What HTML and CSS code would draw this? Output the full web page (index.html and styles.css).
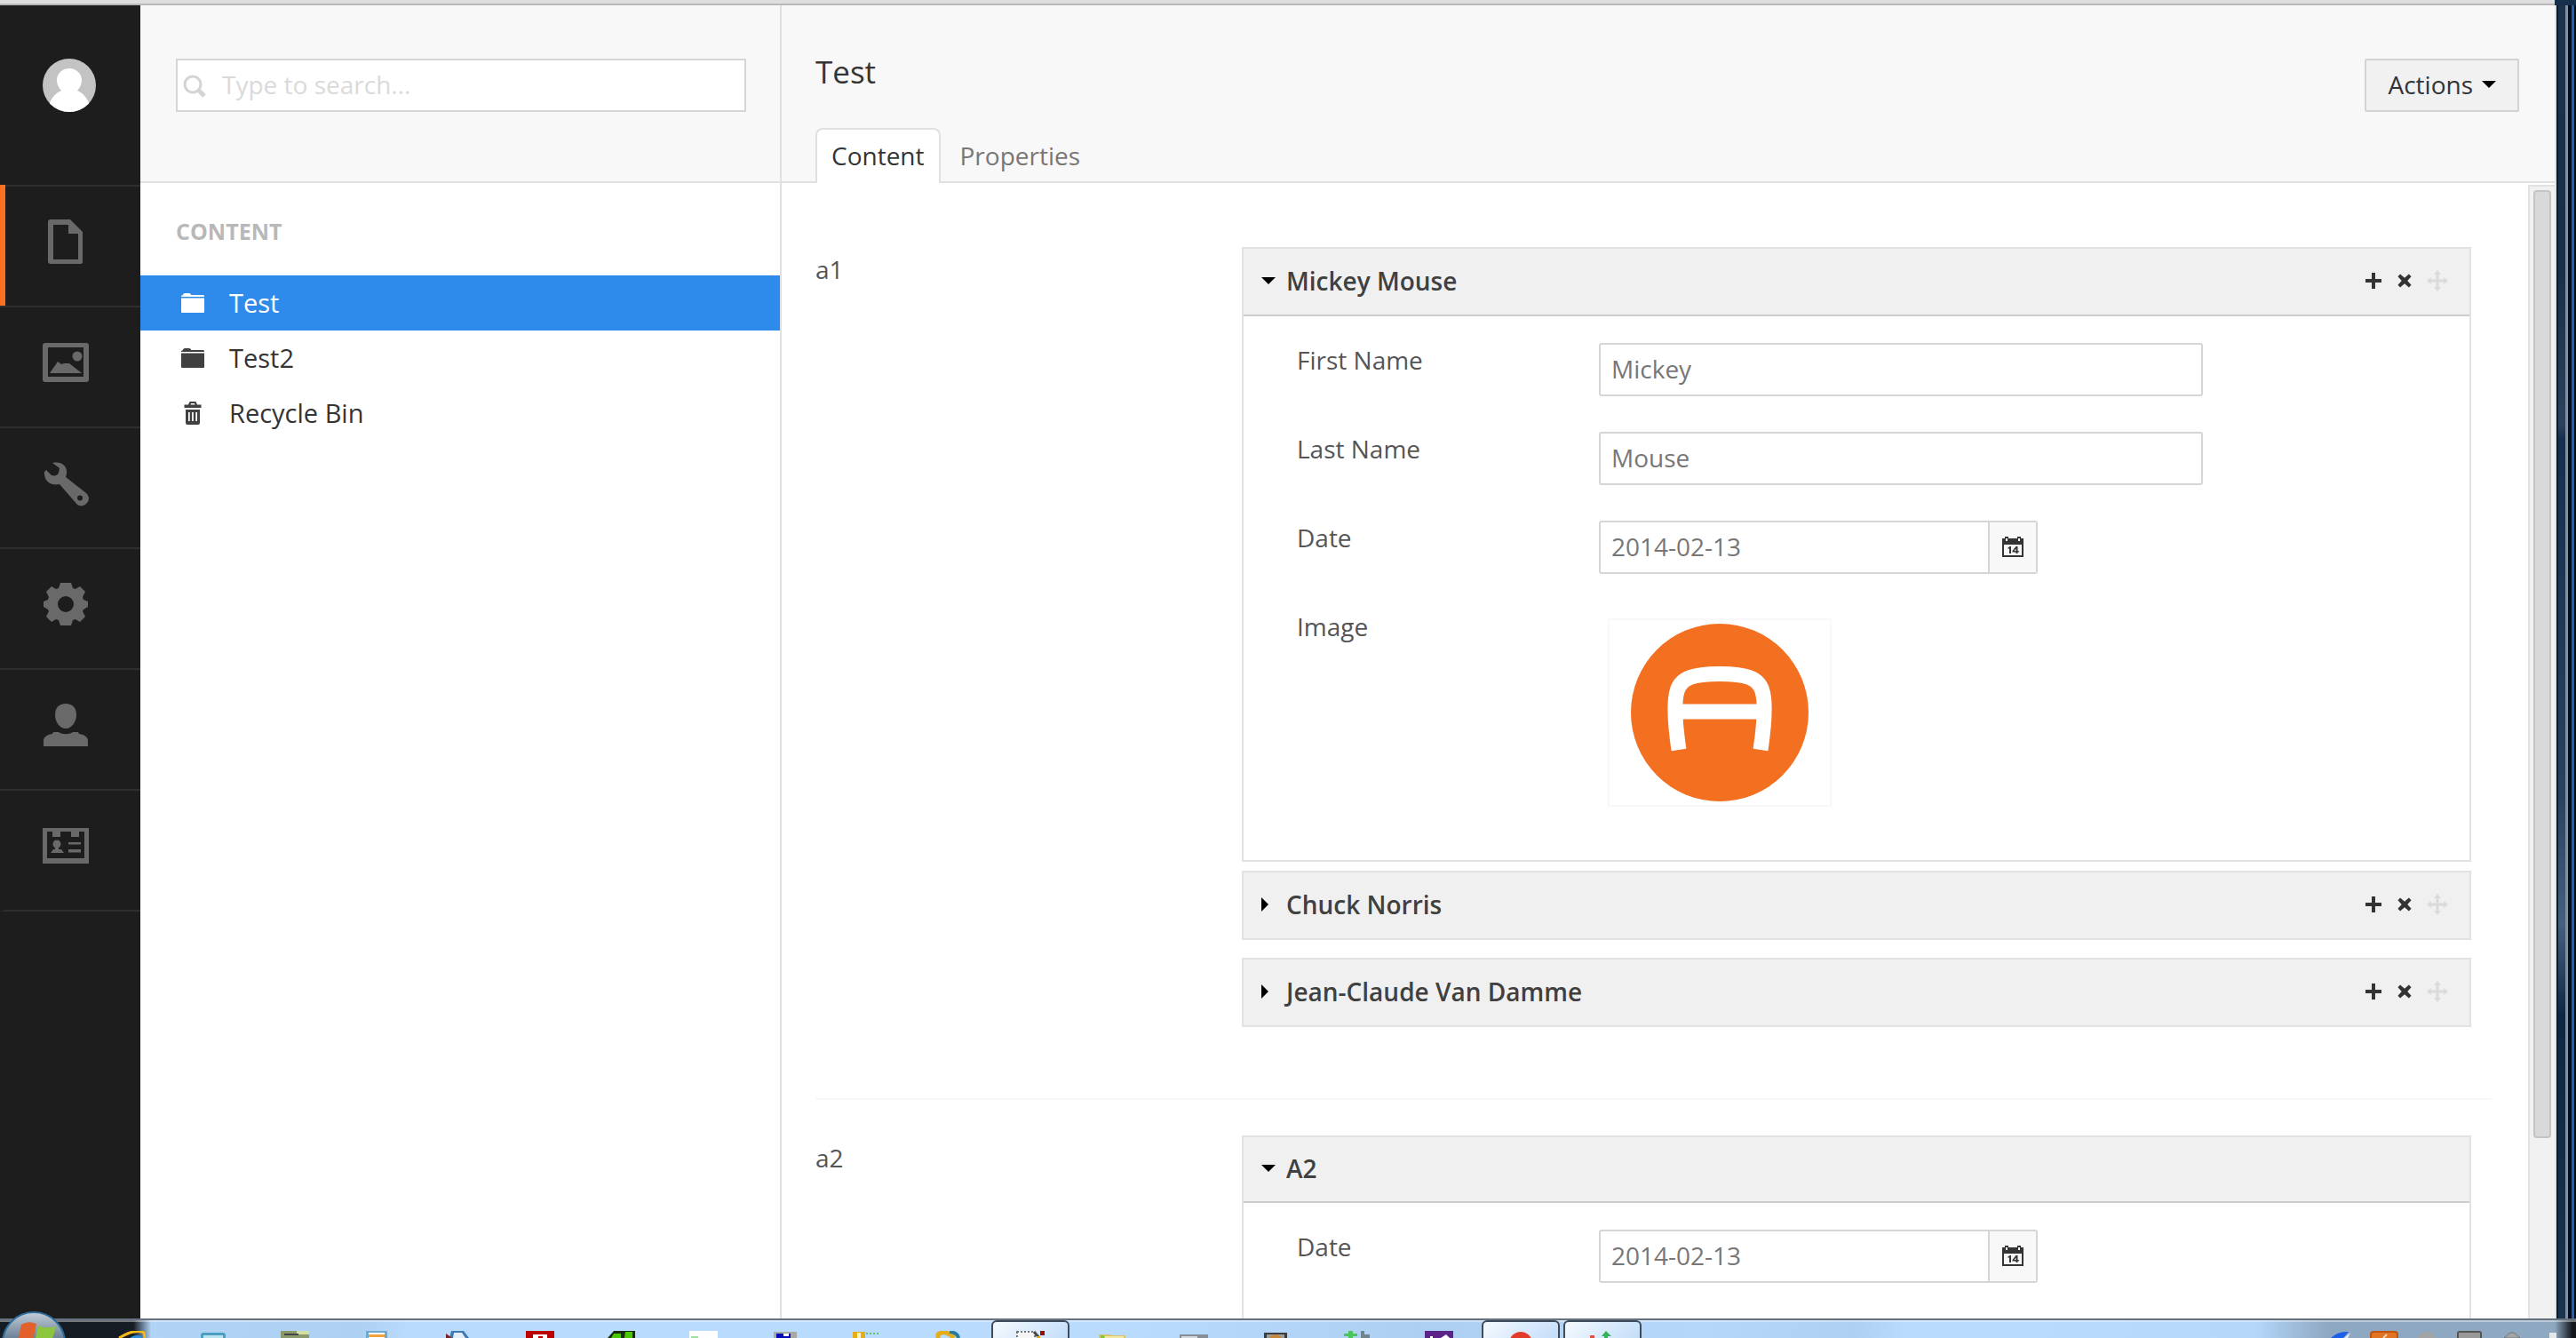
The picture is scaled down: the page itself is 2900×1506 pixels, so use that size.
FILE: index.html
```html
<!DOCTYPE html>
<html lang="en">
<head>
<meta charset="utf-8">
<title>Test</title>
<link rel="stylesheet" href="styles.css">
</head>
<body>
<svg class="defs" aria-hidden="true">
  <symbol id="i-plus" viewBox="0 0 20 20"><path d="M8 1h4v7h7v4h-7v7H8v-7H1V8h7z"/></symbol>
  <symbol id="i-cross" viewBox="0 0 20 20"><path d="M4.6 1.6 10 6.4l5.4-4.8 3 3L13.6 10l4.8 5.400-3 3L10 13.600l-5.400 4.800-3-3L6.400 10 1.600 4.600z"/></symbol>
  <symbol id="i-move" viewBox="0 0 24 24"><path d="m12 0 4 5h-2.500v5.500H19V8l5 4-5 4v-2.500h-5.500V19H16l-4 5-4-5h2.500v-5.500H5V16l-5-4 5-4v2.500h5.500V5H8z"/></symbol>
  <symbol id="i-down" viewBox="0 0 16 8"><path d="M0 0h16L8 8z"/></symbol>
  <symbol id="i-right" viewBox="0 0 8 16"><path d="M0 0v16l8-8z"/></symbol>
  <symbol id="i-folder" viewBox="0 0 26 22"><path d="M0 4V3l2-1V1l2-1h5l2 1v1h14l1 1v1z"/><path d="M0 5.500h26V21a1 1 0 0 1-1 1H1a1 1 0 0 1-1-1z"/></symbol>
  <symbol id="i-trash" viewBox="0 0 20 26"><path fill-rule="evenodd" d="M5 3.500 6.500 0h7L15 3.500h4.500V7H.5V3.500zm2.500 0h5L12 2H8zM2 9h16v15a2 2 0 0 1-2 2H4a2 2 0 0 1-2-2zm3 3v10h1.700V12zm4.100 0v10h1.700V12zm4.200 0v10H15V12z"/></symbol>
  <symbol id="i-cal" viewBox="0 0 26 26"><path fill-rule="evenodd" d="M1 3h3V1h4v2h10V1h4v2h3v21H1zm2 7v12h20V10zM5 3v3h2V3zm14 0v3h2V3z"/><path d="M9.500 12H11v8H9v-5.700l-1.500.8v-1.700zM16.500 12h2v5h1.300v1.500h-1.300V20h-2v-1.500h-4V17zm0 2.500L14.500 17h2z"/></symbol>
</svg>

<div class="chrome-edge"></div>
<div class="screen">
  <div class="app">
    <nav class="sections" aria-label="Sections">
      <a class="avatar" href="#" aria-label="Account">
        <svg viewBox="0 0 60 60"><clipPath id="round"><circle cx="30" cy="30" r="30"/></clipPath><g clip-path="url(#round)"><rect width="60" height="60" fill="#c3c3c3"/><path fill="#fff" d="M30 11c8 0 14 6 14 13 0 5-2 9-5 12 7 3 12 9 14 17L46 60H14L7 53c2-8 7-14 14-17-3-3-5-7-5-12 0-7 6-13 14-13z"/></g></svg>
      </a>
      <a class="section active" href="#" aria-label="Content"><svg viewBox="0 0 52 52"><path fill-rule="evenodd" d="M9 1h22l14 14v34a2 2 0 0 1-2 2H9a3 3 0 0 1-3-3V4a3 3 0 0 1 3-3zm3 6v39h28V17H29V7z"/></svg></a>
      <a class="section" href="#" aria-label="Media"><svg viewBox="0 0 52 52"><path fill-rule="evenodd" d="M3 4h46a3 3 0 0 1 3 3v38a3 3 0 0 1-3 3H3a3 3 0 0 1-3-3V7a3 3 0 0 1 3-3zm3 5v34h40V9z"/><path d="M8 38 17 25l4 3 3-1h6l14 11zM0 42h52v3H0z"/><circle cx="39" cy="19" r="5.500"/></svg></a>
      <a class="section" href="#" aria-label="Settings"><svg viewBox="0 0 52 52"><path fill-rule="evenodd" d="M11 3c10-2 17 3 16 12l-1 4 23 18a7.500 7.500 0 0 1 1 11 8 8 0 0 1-11 2L19 27C10 29 1 24 2 13l2-2 6 6c4 1 7 0 8-3l1-5zm31 36.500a3 3 0 1 0 .1 6 3 3 0 0 0-.1-6z"/></svg></a>
      <a class="section" href="#" aria-label="Developer"><svg viewBox="0 0 52 52"><path fill-rule="evenodd" d="M20 2h12l2 6 3 1 5-3 6 6-3 6 1 3 5 2v6l-5 3-1 2 3 6-6 6-5-3-3 1-2 6H20l-2-6-3-1-5 3-6-6 3-6-1-2-5-3v-6l5-2 1-3-3-6 6-6 5 3 3-1zm6 15a9 9 0 1 0 0 18 9 9 0 0 0 0-18z"/></svg></a>
      <a class="section" href="#" aria-label="Users"><svg viewBox="0 0 52 52"><path d="M26 2c8 0 12 5 12 13 0 7-5 15-12 15s-12-8-12-15C14 7 18 2 26 2zM12 34h6c4 3 12 3 16 0h6l1 2c7 1 10 4 10 8v6H1v-6c0-4 3-7 10-8z"/></svg></a>
      <a class="section" href="#" aria-label="Members"><svg viewBox="0 0 52 52"><path fill-rule="evenodd" d="M0 6h52v40H0zm5 4v30h42V10h-6v6h-9v-6H20v6h-9v-6z"/><circle cx="16" cy="24" r="4.500"/><path d="M14 26h4v4h3l3 4H9l3-4h2zM29 22h14v2.500H29zM29 30h14v3.500H29z"/></svg></a>
    </nav>

    <aside class="tree">
      <form class="search">
        <svg class="search-icon" viewBox="0 0 26 26"><circle cx="11" cy="11" r="9" fill="none" stroke="#d4d4d4" stroke-width="3"/><path d="m17 17 7 7" stroke="#d4d4d4" stroke-width="5"/></svg>
        <input type="text" aria-label="Search" placeholder="Type to search...">
      </form>
      <h2>CONTENT</h2>
      <ul>
        <li class="selected"><a href="#"><svg class="folder"><use href="#i-folder"/></svg>Test</a></li>
        <li><a href="#"><svg class="folder"><use href="#i-folder"/></svg>Test2</a></li>
        <li><a href="#"><svg class="trash"><use href="#i-trash"/></svg>Recycle Bin</a></li>
      </ul>
    </aside>

    <main class="editor">
      <header class="editor-head">
        <div class="title-row">
          <h1>Test</h1>
          <button class="actions" type="button">Actions <svg class="caret"><use href="#i-down"/></svg></button>
        </div>
        <div class="tabs">
          <a class="tab current" href="#">Content</a>
          <a class="tab" href="#">Properties</a>
        </div>
      </header>
      <div class="scroller">
        <div class="content">
          <section class="property">
            <h3>a1</h3>
            <div class="items">
              <div class="panel open">
                <div class="panel-head"><button class="toggle" type="button"><svg class="arrow down"><use href="#i-down"/></svg>Mickey Mouse</button>
                  <div class="tools"><button type="button" aria-label="Add"><svg><use href="#i-plus"/></svg></button><button type="button" aria-label="Remove"><svg class="small"><use href="#i-cross"/></svg></button><button class="move" type="button" aria-label="Move"><svg><use href="#i-move"/></svg></button></div></div>
                <div class="panel-body">
                  <div class="field"><label for="first">First Name</label><input class="text" id="first" type="text" value="Mickey"></div>
                  <div class="field"><label for="last">Last Name</label><input class="text" id="last" type="text" value="Mouse"></div>
                  <div class="field"><label for="date1">Date</label><div class="date"><input class="text" id="date1" type="text" value="2014-02-13"><button type="button" aria-label="Pick a date"><svg><use href="#i-cal"/></svg></button></div></div>
                  <div class="field"><span class="label">Image</span><div class="picture"><svg viewBox="0 0 200 200"><circle cx="100" cy="100" r="100" fill="#f37021"/><path fill="none" stroke="#fff" stroke-width="17" d="M54 142C50 115 48 90 52 76 56 61 70 56.500 100 56.500s44 4.500 48 19.500c4 14 2 39-2 66M50 99h100"/></svg></div></div>
                </div>
              </div>
              <div class="panel">
                <div class="panel-head"><button class="toggle" type="button"><svg class="arrow"><use href="#i-right"/></svg>Chuck Norris</button>
                  <div class="tools"><button type="button" aria-label="Add"><svg><use href="#i-plus"/></svg></button><button type="button" aria-label="Remove"><svg class="small"><use href="#i-cross"/></svg></button><button class="move" type="button" aria-label="Move"><svg><use href="#i-move"/></svg></button></div></div>
              </div>
              <div class="panel">
                <div class="panel-head"><button class="toggle" type="button"><svg class="arrow"><use href="#i-right"/></svg>Jean-Claude Van Damme</button>
                  <div class="tools"><button type="button" aria-label="Add"><svg><use href="#i-plus"/></svg></button><button type="button" aria-label="Remove"><svg class="small"><use href="#i-cross"/></svg></button><button class="move" type="button" aria-label="Move"><svg><use href="#i-move"/></svg></button></div></div>
              </div>
            </div>
          </section>
          <section class="property">
            <h3>a2</h3>
            <div class="items">
              <div class="panel open">
                <div class="panel-head plain"><button class="toggle" type="button"><svg class="arrow down"><use href="#i-down"/></svg>A2</button></div>
                <div class="panel-body">
                  <div class="field"><label for="date2">Date</label><div class="date"><input class="text" id="date2" type="text" value="2014-02-13"><button type="button" aria-label="Pick a date"><svg><use href="#i-cal"/></svg></button></div></div>
                </div>
              </div>
            </div>
          </section>
        </div>
        <div class="scrollbar"><div class="thumb"></div></div>
      </div>
    </main>
  </div>
  <div class="window-frame"></div>
</div>

<footer class="taskbar">
  <svg class="orb" viewBox="0 0 76 30"><defs><linearGradient id="og" x2="0" y2="1"><stop stop-color="#c3ced8"/><stop offset=".4" stop-color="#6f8599"/><stop offset="1" stop-color="#345d80"/></linearGradient></defs><circle cx="38" cy="36" r="35" fill="url(#og)" stroke="#2b6da0" stroke-width="2"/><path fill="#e2602b" d="M24 15q7-5 17-1l-4 18H20z"/><path fill="#8cc63e" d="M43 16q8 4 20 1l-5 18H39z"/></svg>
  <div class="apps">
    <span class="app-slot"><svg viewBox="0 0 32 8"><path fill="none" stroke="#f5b916" stroke-width="3" d="M2 8Q20-3 30 2l1 6"/><path fill="#2f8fd8" d="M14 8q6-5 13-2v2z"/></svg></span>
    <span class="app-slot"><svg viewBox="0 0 32 8"><rect x="2" y="2" width="28" height="8" rx="3" fill="#4b9fc4"/><path fill="#b9e3ee" d="M5 5h22v3H5z"/></svg></span>
    <span class="app-slot"><svg viewBox="0 0 32 8"><path fill="#8a9a6c" d="M0 0h32v8H0z"/><path fill="#d4dfa3" d="M18 0h14v4H18z"/><path fill="#444" d="M4 3h16v2H4z"/></svg></span>
    <span class="app-slot"><svg viewBox="0 0 32 8"><path fill="#6caad0" d="M4 0h24v8H4z"/><path fill="#fff" d="M7 2h18v6H7z"/><path fill="#f0a23c" d="M7 4h18v3H7z"/></svg></span>
    <span class="app-slot"><svg viewBox="0 0 32 8"><path fill="#3f78b5" d="M8 0h14l6 8H6z"/><path fill="#e3edf7" d="M11 2h9l4 6H10z"/><path fill="#7c1f28" d="m2 3 7 5H2z"/></svg></span>
    <span class="app-slot"><svg viewBox="0 0 32 8"><path fill="#bd0000" d="M0 0h32v8H0z"/><path fill="#fff" d="M8 4h16v4H8z"/><path fill="#bd0000" d="M14 6h5v2h-5z"/></svg></span>
    <span class="app-slot"><svg viewBox="0 0 32 8"><path fill="#182b0b" d="M0 8 7 0h24v8z"/><path fill="#49c800" d="M7 3h8v5H4zM20 1h8v7h-9z"/></svg></span>
    <span class="app-slot"><svg viewBox="0 0 32 8"><path fill="#fff" d="M0 0h32v8H0z"/><path fill="#9fe0a0" d="M2 6h8v2H2z"/></svg></span>
    <span class="app-slot"><svg viewBox="0 0 32 8"><path fill="#a9a9a3" d="M3 1h26v7H3z"/><path fill="#0709b8" d="M6 3h16v5H6z"/><path fill="#fff" d="M14 3h6v3h-6z"/></svg></span>
    <span class="app-slot"><svg viewBox="0 0 32 8"><path fill="#e4ad1b" d="M0 1h14v7H0z"/><path fill="#fff3bd" d="M5 2h4v6H5z"/><path stroke="#63c36a" stroke-width="2" stroke-dasharray="2" d="M15 3h16"/></svg></span>
    <span class="app-slot"><svg viewBox="0 0 32 8"><path fill="none" stroke="#e4ad1b" stroke-width="5" d="M4 8V4q8-6 18 4"/><path fill="none" stroke="#287b9e" stroke-width="4" d="M17 1q9 1 10 7"/></svg></span>
    <span class="app-slot running"><svg viewBox="0 0 32 8"><path fill="#f5f5f5" stroke="#777" stroke-dasharray="2" stroke-width="2" d="M1 1h20v9H1z"/><path stroke="#444" stroke-width="3" d="m20 1 6 7"/><path fill="#990c12" d="M27 0h5v5h-5z"/><path fill="#e4ad1b" d="M23 6h4v2h-4z"/></svg></span>
    <span class="app-slot"><svg viewBox="0 0 32 8"><path fill="#d9c468" d="M1 4h12l3 1h15v3H1z"/><path fill="#f1e8a5" d="M8 6h21v2H8z"/><path fill="#7cc832" d="M3 5h4v3H3z"/></svg></span>
    <span class="app-slot"><svg viewBox="0 0 32 8"><path fill="#868d94" d="M0 4h32v4H0z"/><path fill="#d5dae0" d="M2 6h18v2H2z"/></svg></span>
    <span class="app-slot"><svg viewBox="0 0 32 8"><path fill="#3c3c3c" d="M3 2h26v6H3z"/><path fill="#9a9d9f" d="M6 4h20v4H6z"/><path fill="#c4873a" d="M9 8q7-8 14 0z"/></svg></span>
    <span class="app-slot"><svg viewBox="0 0 32 8"><path fill="#4cc45e" d="M6 0h5v3h5v3h-5v2H6V6H1V3h5z"/><path fill="#71858d" d="M20 0h4v4h6v4H20z"/></svg></span>
    <span class="app-slot"><svg viewBox="0 0 32 8"><path fill="#5c2389" d="M0 0h32v8H0z"/><path fill="#fff" d="m18 8 6-4 4 4zM6 6h3v2H6z"/></svg></span>
    <span class="app-slot running"><svg viewBox="0 0 32 8"><circle cx="16" cy="14" r="13" fill="#e23b2b"/></svg></span>
    <span class="app-slot running"><svg viewBox="0 0 32 8"><path fill="#36b35a" d="m20 0 6 6h-4v2h-4V6h-3z"/><path fill="#dd4f45" d="M2 5h5v3H2z"/></svg></span>
  </div>
  <div class="tray">
    <svg viewBox="0 0 32 8"><path fill="#1d5fe8" d="M4 8Q12 0 24 1l-6 7z"/><path fill="#e6effd" d="m19 8 7-6-3 6z"/></svg>
    <svg viewBox="0 0 32 8"><rect x="1" y="1" width="30" height="14" rx="3" fill="#e07423" stroke="#bf5511" stroke-width="2"/><path stroke="#f9d4b0" stroke-width="2" d="m15 8 4-4"/></svg>
    <svg viewBox="0 0 32 8"><circle cx="16" cy="12" r="11" fill="#a3a4a5"/></svg>
    <svg viewBox="0 0 32 8"><rect x="3" y="1" width="26" height="14" rx="2" fill="#999" stroke="#555" stroke-width="2"/></svg>
    <svg viewBox="0 0 32 8"><path fill="#a5a6a3" stroke="#6d767d" d="m7 8 7-6h4l7 6z"/></svg>
    <svg viewBox="0 0 32 8"><path fill="#e4e6e8" d="M10 2h8v6h-8z"/></svg>
  </div>
</footer>
</body>
</html>
```

FILE: styles.css
```css
* { box-sizing: border-box; }

body {
  margin: 0;
  height: 100vh;
  display: flex;
  flex-direction: column;
  overflow: hidden;
  font: 28px/38px "Open Sans", "Noto Sans", sans-serif;
  color: #555;
  background: #fff;
}
.defs { position: absolute; width: 0; height: 0; }
a { color: inherit; text-decoration: none; }
button, input { font: inherit; color: inherit; margin: 0; border-radius: 0; }
button { cursor: pointer; padding: 0; }
h1, h2, h3, ul { margin: 0; padding: 0; font-weight: 400; }
svg { display: block; flex: none; fill: currentColor; }

.chrome-edge {
  flex: none;
  height: 6px;
  margin-right: 24px;
  background: #dedede;
  border-bottom: 2px solid #b8b8b8;
  box-shadow: 24px 0 #16304b;
}
.screen { flex: 1; min-height: 0; display: flex; }
.app { flex: 1; min-width: 0; display: flex; }
.window-frame {
  width: 24px;
  background:
    linear-gradient(90deg, #dfe3e6 0 2px, #0d1a26 2px 4px, transparent 4px 12px, #8290a0 12px 15px, #001022 15px 19px, #1f60a8 19px 22px, #000b18 22px),
    linear-gradient(#1b334b, #16304a 20%, #29425d 32%, #14304e 33%, #27425f 60%, #44607f 70%, #0c2743 77%, #19344f);
}

/* section bar */
.sections { width: 158px; flex: none; background: #1d1d1d; color: #696969; }
.avatar { display: block; height: 202px; padding: 60px 48px 0; }
.avatar svg { width: 60px; height: 60px; }
.section {
  display: flex;
  align-items: flex-start;
  height: 136px;
  padding: 38px 0 0 42px;
  border-left: 6px solid transparent;
  background: linear-gradient(#2e2e2e, #2e2e2e) top / 100% 2px no-repeat border-box;
}
.section.active { border-left-color: #fb6f20; }
.section:last-child { height: 138px; border-bottom: 2px solid #2e2e2e; }
.section svg { width: 52px; height: 52px; }

/* tree */
.tree { width: 722px; flex: none; border-right: 2px solid #e0e0e0; }
.search {
  display: flex;
  position: relative;
  height: 200px;
  padding: 60px 38px 0 40px;
  background: #f8f8f8;
  border-bottom: 2px solid #e0e0e0;
}
.search input { width: 100%; height: 60px; padding: 0 50px 2px; border: 2px solid #d6d6d6; background: #fff; outline: 0; }
.search input::placeholder { color: #dadada; opacity: 1; }
.search-icon { position: absolute; left: 48px; top: 78px; width: 26px; height: 26px; }
.tree h2 { padding: 35px 40px 31px; font-size: 25px; font-weight: 700; color: #b8b8b8; }
.tree ul { list-style: none; color: #343434; font-size: 29px; }
.tree li a { display: flex; align-items: center; height: 62px; padding-left: 46px; }
.tree li svg { color: #404040; }
.tree .selected { background: #2e8aeb; color: #fff; }
.tree .selected svg { color: #fff; }
.folder { width: 26px; height: 22px; margin-right: 28px; }
.trash { width: 20px; height: 26px; margin: 0 31px 0 3px; }

/* editor */
.editor { flex: 1; min-width: 0; display: flex; flex-direction: column; }
.editor-head {
  flex: none;
  height: 200px;
  display: flex;
  flex-direction: column;
  justify-content: space-between;
  padding: 0 40px 0 38px;
  background: #f8f8f8;
  border-bottom: 2px solid #e0e0e0;
}
.title-row { display: flex; justify-content: space-between; align-items: flex-start; }
h1 { margin-top: 56px; font-size: 35px; color: #343434; }
.actions {
  display: flex;
  align-items: center;
  gap: 10px;
  height: 60px;
  margin-top: 60px;
  padding: 0 24px 2px;
  border: 2px solid #d3d3d3;
  border-radius: 2px;
  background: #f1f1f1;
  color: #343434;
}
.caret { width: 16px; height: 8px; color: #000; }
.tabs { display: flex; gap: 4px; margin-bottom: -2px; color: #777; }
.tab { height: 62px; padding: 8px 16px 0; line-height: 42px; border: 2px solid transparent; border-bottom: 0; border-radius: 8px 8px 0 0; }
.tab.current { background: #fff; border-color: #e0e0e0; color: #343434; }

.scroller { flex: 1; min-height: 0; display: flex; overflow: hidden; }
.content { flex: 1; min-width: 0; padding: 32px 40px 0 38px; }
.scrollbar { width: 30px; margin-top: 2px; padding: 4px 4px 0; background: #f1f1f1; border: solid #e2e2e2; border-width: 2px 0 0 2px; }
.thumb { height: 84%; width: 20px; margin: 0 auto; background: #d9d9d9; border: 2px solid #c4c4c4; border-radius: 4px; }

.property { display: flex; padding: 40px 24px 80px 0; }
.property + .property { border-top: 2px solid #f8f8f8; }
.property h3 { width: 480px; flex: none; font-size: 28px; line-height: 50px; }
.items { flex: 1; min-width: 0; display: flex; flex-direction: column; gap: 20px; }
.panel.open { border: 2px solid #e2e2e2; border-top: 0; margin-bottom: -10px; }
.panel-head {
  display: flex;
  align-items: center;
  justify-content: space-between;
  height: 78px;
  padding: 0 24px 2px 20px;
  border: 2px solid #e2e2e2;
  background: #f0f0f0;
  color: #404040;
}
.panel.open .panel-head { border: solid #e2e2e2; border-width: 2px 0; border-bottom-color: #ccc; }
.panel .plain { height: 76px; }
.toggle { display: flex; align-items: center; border: 0; background: none; font-weight: 600; }
.arrow { width: 8px; height: 16px; margin-right: 20px; color: #000; }
.arrow.down { width: 16px; height: 8px; margin-right: 12px; }
.tools { display: flex; align-items: center; gap: 16px; }
.tools button { border: 0; background: none; color: #333; }
.tools svg { width: 20px; height: 20px; }
.tools .small { width: 18px; height: 18px; }
.tools .move svg { width: 24px; height: 24px; color: #dadada; }

.panel-body { display: flex; flex-direction: column; gap: 40px; padding: 30px 60px 60px; }
.field { display: flex; align-items: flex-start; }
.field label, .field .label { width: 340px; flex: none; }
.text { width: 680px; height: 60px; padding: 0 12px 2px; border: 2px solid #d6d6d6; border-radius: 3px; background: #fff; color: #777; outline: 0; }
.date { display: flex; }
.date .text { width: 440px; border-radius: 3px 0 0 3px; }
.date button { width: 54px; display: flex; align-items: center; justify-content: center; border: 2px solid #d6d6d6; border-left: 0; border-radius: 0 3px 3px 0; background: #f8f8f8; color: #343434; }
.date svg { width: 26px; height: 26px; }
.picture { display: flex; justify-content: center; width: 252px; height: 212px; margin: 10px 0 0 10px; padding-top: 4px; border: 2px solid #f8f8f8; }
.picture svg { width: 200px; height: 200px; }

/* desktop taskbar */
.taskbar {
  position: relative;
  flex: none;
  height: 22px;
  display: flex;
  justify-content: space-between;
  padding: 0 8px 0 102px;
  border-top: 2px solid #65717f;
  background:
    linear-gradient(#ffffff66 0 2px, transparent 2px),
    linear-gradient(90deg, #161c23 0 150px, transparent 170px),
    linear-gradient(270deg, #12161b 0 4px, #8ea8c2 24px 280px, transparent 360px),
    linear-gradient(100deg, #b3d5f8, #aed0f2 14%, #b9dbfe 16% 44%, #adcff2 55%, #b5d7fa 66%, #aed0f2 72%, #b9dbfe 74% 78%, #b0d2f5);
}
.orb { position: absolute; left: 0; bottom: 0; width: 76px; height: 30px; }
.apps { display: flex; }
.app-slot { width: 92px; height: 20px; display: flex; align-items: flex-end; justify-content: center; }
.app-slot svg { width: 32px; height: 8px; }
.running { width: 88px; margin: 0 2px; border: 2px solid #3f4b58; border-bottom: 0; border-radius: 6px 6px 0 0; background: linear-gradient(135deg, #f4f9fe, #c3defa); }
.tray { display: flex; align-items: flex-end; gap: 16px; }
.tray svg { width: 32px; height: 8px; }
```
